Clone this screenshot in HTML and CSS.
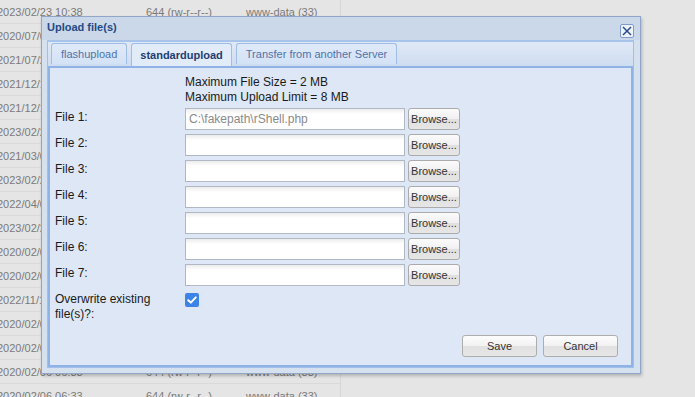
FILE: index.html
```html
<!DOCTYPE html>
<html>
<head>
<meta charset="utf-8">
<link rel="stylesheet" href="styles.css">
</head>
<body>
<div class="page">
  <div class="files">
    <div class="frow"><span class="c-date">2023/02/23 10:38</span><span class="c-perm">644 (rw-r--r--)</span><span class="c-own">www-data (33)</span></div>
    <div class="frow"><span class="c-date">2020/07/07 11:02</span><span class="c-perm">644 (rw-r--r--)</span><span class="c-own">www-data (33)</span></div>
    <div class="frow"><span class="c-date">2021/07/21 09:14</span><span class="c-perm">644 (rw-r--r--)</span><span class="c-own">www-data (33)</span></div>
    <div class="frow"><span class="c-date">2021/12/13 16:20</span><span class="c-perm">644 (rw-r--r--)</span><span class="c-own">www-data (33)</span></div>
    <div class="frow"><span class="c-date">2021/12/13 16:21</span><span class="c-perm">644 (rw-r--r--)</span><span class="c-own">www-data (33)</span></div>
    <div class="frow"><span class="c-date">2023/02/23 10:38</span><span class="c-perm">644 (rw-r--r--)</span><span class="c-own">www-data (33)</span></div>
    <div class="frow"><span class="c-date">2021/03/09 08:45</span><span class="c-perm">644 (rw-r--r--)</span><span class="c-own">www-data (33)</span></div>
    <div class="frow"><span class="c-date">2023/02/23 10:38</span><span class="c-perm">644 (rw-r--r--)</span><span class="c-own">www-data (33)</span></div>
    <div class="frow"><span class="c-date">2022/04/06 12:10</span><span class="c-perm">644 (rw-r--r--)</span><span class="c-own">www-data (33)</span></div>
    <div class="frow"><span class="c-date">2023/02/23 10:38</span><span class="c-perm">644 (rw-r--r--)</span><span class="c-own">www-data (33)</span></div>
    <div class="frow"><span class="c-date">2020/02/06 06:33</span><span class="c-perm">644 (rw-r--r--)</span><span class="c-own">www-data (33)</span></div>
    <div class="frow"><span class="c-date">2020/02/06 06:33</span><span class="c-perm">644 (rw-r--r--)</span><span class="c-own">www-data (33)</span></div>
    <div class="frow"><span class="c-date">2022/11/17 14:02</span><span class="c-perm">644 (rw-r--r--)</span><span class="c-own">www-data (33)</span></div>
    <div class="frow"><span class="c-date">2020/02/06 06:33</span><span class="c-perm">644 (rw-r--r--)</span><span class="c-own">www-data (33)</span></div>
    <div class="frow"><span class="c-date">2020/02/06 06:33</span><span class="c-perm">644 (rw-r--r--)</span><span class="c-own">www-data (33)</span></div>
    <div class="frow"><span class="c-date">2020/02/06 06:33</span><span class="c-perm">644 (rw-r--r--)</span><span class="c-own">www-data (33)</span></div>
    <div class="frow"><span class="c-date">2020/02/06 06:33</span><span class="c-perm">644 (rw-r--r--)</span><span class="c-own">www-data (33)</span></div>
  </div>

  <div class="dialog">
    <div class="titlebar">
      <span class="title">Upload file(s)</span>
      <span class="close"><svg width="10" height="10" viewBox="0 0 10 10"><path d="M1 1 L9 9 M9 1 L1 9" stroke="#2b4a8c" stroke-width="1.5" fill="none"/></svg></span>
    </div>
    <div class="tabs">
      <div class="tabnav">
        <span class="tab">flashupload</span>
        <span class="tab active">standardupload</span>
        <span class="tab">Transfer from another Server</span>
      </div>
      <div class="panel">
        <div class="limits">
          <div>Maximum File Size = 2 MB</div>
          <div>Maximum Upload Limit = 8 MB</div>
        </div>
        <div class="rows">
          <div class="row"><span class="label">File 1:</span><span class="field filled">C:\fakepath\rShell.php</span><span class="browse">Browse...</span></div>
          <div class="row"><span class="label">File 2:</span><span class="field"></span><span class="browse">Browse...</span></div>
          <div class="row"><span class="label">File 3:</span><span class="field"></span><span class="browse">Browse...</span></div>
          <div class="row"><span class="label">File 4:</span><span class="field"></span><span class="browse">Browse...</span></div>
          <div class="row"><span class="label">File 5:</span><span class="field"></span><span class="browse">Browse...</span></div>
          <div class="row"><span class="label">File 6:</span><span class="field"></span><span class="browse">Browse...</span></div>
          <div class="row"><span class="label">File 7:</span><span class="field"></span><span class="browse">Browse...</span></div>
        </div>
        <div class="overwrite">
          <span class="label">Overwrite existing<br>file(s)?:</span>
          <span class="check"><svg width="14" height="14" viewBox="0 0 14 14"><path d="M3.2 7.2 L5.8 9.6 L10.8 4.4" stroke="#fff" stroke-width="2" fill="none" stroke-linecap="round" stroke-linejoin="round"/></svg></span>
        </div>
        <div class="actions">
          <span class="btn">Save</span>
          <span class="btn">Cancel</span>
        </div>
      </div>
    </div>
  </div>
</div>
</body>
</html>
```
FILE: styles.css
```css
html, body {
  margin: 0;
  padding: 0;
}
body {
  background: #e5e5e5;
  font-family: "Liberation Sans", Arial, sans-serif;
  overflow: hidden;
}
.page {
  position: relative;
  width: 695px;
  height: 397px;
  overflow: hidden;
}
.files {
  width: 340px;
  border-right: 1px solid #d6d6d6;
  border-top: 1px solid #d8d8d8;
  margin-top: -1px;
}
.frow {
  display: flex;
  height: 23px;
  border-bottom: 1px solid #dadada;
  align-items: center;
  font-size: 11px;
  color: #7a7a7a;
}
.c-date {
  width: 149px;
  margin-left: -3px;
}
.c-perm {
  width: 100px;
}
.c-own {
  width: 90px;
}

.dialog {
  position: absolute;
  left: 41px;
  top: 16px;
  border: 1px solid #91a6c6;
  background: #d6e1ef;
  box-shadow: 1px 2px 3px rgba(0,0,0,0.22);
  display: flex;
  flex-direction: column;
  padding: 0 6px 5px 5px;
  box-sizing: content-box;
  width: 587px;
  height: 351px;
}
.titlebar {
  height: 23px;
  background: #cad8ea;
  margin: 0 -6px 0 -5px;
  padding: 0 6px 0 5px;
  display: flex;
  align-items: center;
  justify-content: space-between;
}
.title {
  font-size: 11px;
  font-weight: bold;
  color: #244a82;
  margin-top: -3px;
}
.close {
  width: 12px;
  height: 12px;
  border: 1px solid #7d9bcf;
  border-radius: 2px;
  background: #eef3fb;
  display: flex;
  align-items: center;
  justify-content: center;
  margin-top: 4px;
}
.tabs {
  flex: 1;
  display: flex;
  flex-direction: column;
  border: 1px solid #a2bfe8;
  border-top: 2px solid #a9c4ea;
  background: linear-gradient(#e0e9f6, #cddcf0 26px, #dde7f5 26px);
}
.tabnav {
  display: flex;
  gap: 4px;
  padding: 1px 0 0 3px;
  height: 22px;
}
.tab {
  height: 21px;
  box-sizing: border-box;
  border: 1px solid #9ebde7;
  border-bottom: none;
  border-radius: 3px 3px 0 0;
  background: linear-gradient(#dfe9f8, #d4e2f6);
  padding: 0 9px;
  font-size: 11px;
  color: #4f73aa;
  display: flex;
  align-items: center;
}
.tab.active {
  height: 23px;
  padding: 0 8px;
  background: #e2ebf8;
  color: #1d3d72;
  font-weight: bold;
  position: relative;
  z-index: 1;
}
.panel {
  flex: 1;
  display: flex;
  flex-direction: column;
  border: 2px solid #8fb3e6;
  background: #dde7f5;
  padding: 7px 13px 8px 5px;
  margin-top: 1px;
  font-size: 12px;
  color: #1a1a1a;
}
.limits {
  padding-left: 130px;
  line-height: 15px;
  margin-bottom: 3px;
}
.rows {
  display: flex;
  flex-direction: column;
  gap: 4px;
}
.row {
  display: flex;
  align-items: center;
  height: 22px;
}
.label {
  width: 130px;
  line-height: 15px;
  margin-top: -3px;
}
.field {
  height: 20px;
  border: 1px solid #b0b8c4;
  background: linear-gradient(#ececec, #fff 5px);
  box-sizing: content-box;
  font-size: 12px;
  color: #8a8a8a;
  line-height: 20px;
  padding-left: 3px;
  width: 215px;
}
.browse {
  margin-left: 3px;
  width: 50px;
  height: 20px;
  border: 1px solid #ababab;
  border-radius: 3px;
  background: linear-gradient(#fbfbfb, #f0f0f0 50%, #e0e0e0 50%, #e6e6e6);
  font-size: 11px;
  color: #333;
  display: flex;
  align-items: center;
  justify-content: center;
}
.overwrite {
  display: flex;
  align-items: flex-start;
  margin-top: 6px;
}
.overwrite .label {
  margin-top: 0;
}
.check {
  width: 14px;
  height: 14px;
  border-radius: 2px;
  background: #3c83e6;
  margin-top: 1px;
  display: flex;
}
.actions {
  margin-top: auto;
  display: flex;
  justify-content: flex-end;
  gap: 6px;
}
.btn {
  width: 73px;
  height: 20px;
  border: 1px solid #adadad;
  border-radius: 3px;
  background: linear-gradient(#fcfcfc, #f2f2f2 50%, #e1e1e1 50%, #e6e6e6);
  font-size: 11px;
  color: #333;
  display: flex;
  align-items: center;
  justify-content: center;
}
```
